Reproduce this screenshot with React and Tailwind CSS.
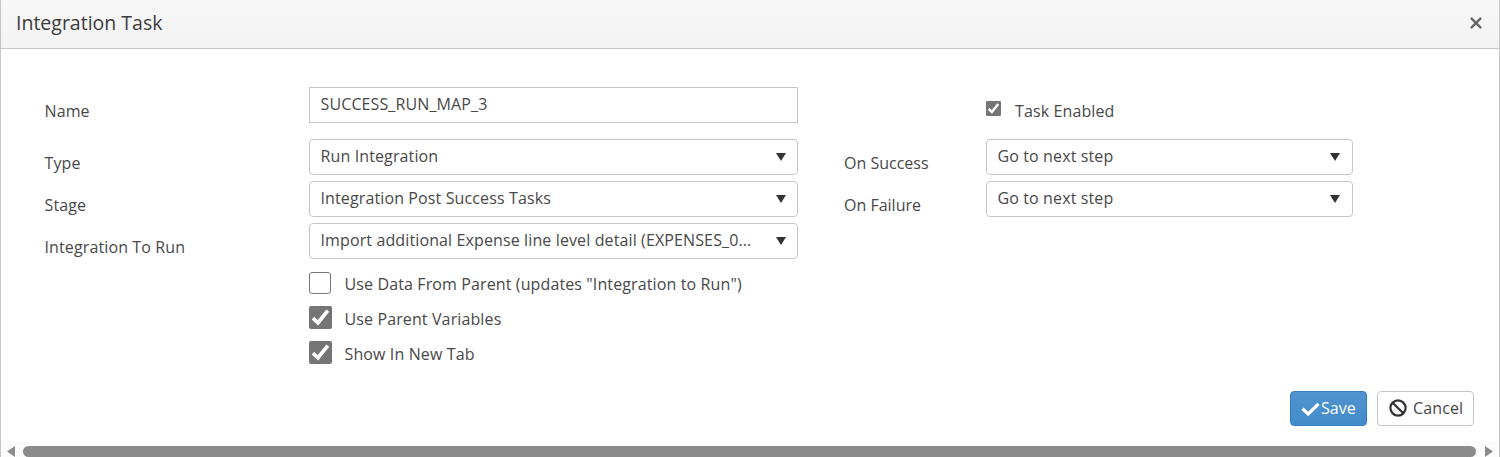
import React from "react";

function Select({ value, className, arrow = "mr-0" }) {
  return (
    <div className={`flex h-9 items-start justify-between rounded-[4px] border border-[#c6c6c6] bg-white pl-[10.5px] pr-[11px] ${className}`}>
      <span className="truncate leading-8">{value}</span>
      <svg className={`mt-[12px] h-[9px] w-[10px] shrink-0 ${arrow}`} viewBox="0 0 10 9">
        <path d="M0 1H10L5 9Z" fill="#333" />
      </svg>
    </div>
  );
}

function Checked({ className }) {
  return (
    <svg className={`shrink-0 ${className}`} viewBox="0 0 22 22">
      <rect width="22" height="22" rx="2" fill="#757575" />
      <path d="M3.8 11.6L8.6 16L18 4.4" fill="none" stroke="#fff" strokeWidth="3.5" />
    </svg>
  );
}

function Label({ children, className }) {
  return <div className={`shrink-0 pt-3 leading-6 ${className}`}>{children}</div>;
}

export default function App() {
  return (
    <div className="flex h-[457px] w-[1500px] flex-col overflow-hidden border-x border-[#c6c6c6] bg-white font-['Open_Sans',sans-serif] text-[16px] tracking-[0.12px] text-[#484848]">
      <header className="flex h-[49px] shrink-0 items-start justify-between border-b border-[#c6c6c6] bg-linear-to-b from-[#f7f7f7] to-[#f3f3f3] pl-[15px] pr-[17px]">
        <h1 className="text-[19.5px] leading-[46px] tracking-normal text-[#3c3c3c]">Integration Task</h1>
        <svg className="mt-[17px] size-3" viewBox="0 0 12 12">
          <path d="M0.9 0.9L11.1 11.1M11.1 0.9L0.9 11.1" stroke="#666" strokeWidth="2.4" />
        </svg>
      </header>

      <main className="flex h-[342px] shrink-0 flex-col pl-[43px] pt-[38px]">
        <div className="flex h-[52px]">
          <Label className="w-[265px] pl-[0.5px]">Name</Label>
          <div className="h-9 w-[489px] border border-[#c6c6c6] pl-[10.5px] leading-8">SUCCESS_RUN_MAP_3</div>
          <Checked className="ml-[188px] mt-[14px] size-[15px]" />
          <Label className="ml-[14px]">Task Enabled</Label>
        </div>
        <div className="flex h-[42px]">
          <Label className="w-[265px] pl-[0.5px]">Type</Label>
          <Select value="Run Integration" className="w-[489px]" />
          <Label className="ml-[46px] w-[142px] tracking-normal">On Success</Label>
          <Select value="Go to next step" className="w-[367px]" arrow="mr-px" />
        </div>
        <div className="flex h-[42px]">
          <Label className="w-[265px] pl-[0.5px]">Stage</Label>
          <Select value="Integration Post Success Tasks" className="w-[489px]" />
          <Label className="ml-[46px] w-[142px] tracking-normal">On Failure</Label>
          <Select value="Go to next step" className="w-[367px]" arrow="mr-px" />
        </div>
        <div className="flex h-[42px]">
          <Label className="w-[265px] pl-[0.5px]">Integration To Run</Label>
          <Select value="Import additional Expense line level detail (EXPENSES_0..." className="w-[489px]" />
        </div>
        <div className="ml-[265px] mt-[6px] flex flex-col">
          <label className="flex h-[35px] gap-[13px]">
            <span className="mt-px size-[22px] rounded-[3px] border border-[#767676]" />
            <span className="pl-[0.5px] pt-px leading-6">Use Data From Parent (updates "Integration to Run")</span>
          </label>
          <label className="flex h-[35px] gap-[13px]">
            <Checked className="-mr-px size-[23px]" />
            <span className="pl-[0.5px] pt-px leading-6">Use Parent Variables</span>
          </label>
          <label className="flex h-[35px] gap-[13px]">
            <Checked className="-mr-px size-[23px]" />
            <span className="pl-[0.5px] pt-px leading-6">Show In New Tab</span>
          </label>
        </div>
      </main>

      <footer className="flex h-[50px] shrink-0 justify-end gap-[10px] pr-[25px]">
        <button className="flex h-[35px] w-[77px] items-start rounded-[4px] border border-[#357ebd] bg-linear-to-b from-[#5094d0] to-[#428bca] pl-[10px] text-white">
          <svg className="mt-[10px] h-[14px] w-[19px]" viewBox="0 0 19 14">
            <path d="M1.5 6.8L7.2 12L17.5 1.8" fill="none" stroke="#fff" strokeWidth="3.2" />
          </svg>
          <span className="ml-px font-medium leading-[33px] tracking-normal">Save</span>
        </button>
        <button className="flex h-[35px] w-[97px] items-start rounded-[4px] border border-[#c6c6c6] bg-linear-to-b from-white to-[#fdfdfd] pl-[11px]">
          <svg className="mt-[7px] size-[18px]" viewBox="0 0 18 18">
            <circle cx="9" cy="9" r="7.6" fill="none" stroke="#333" strokeWidth="2.2" />
            <path d="M3.7 3.7L14.3 14.3" stroke="#333" strokeWidth="2.2" />
          </svg>
          <span className="ml-[6px] leading-[33px]">Cancel</span>
        </button>
      </footer>

      <div className="flex h-4 shrink-0 items-start bg-[#fcfcfc]">
        <svg className="ml-[6px] mt-[5px] h-[11px] w-2 shrink-0" viewBox="0 0 8 11">
          <path d="M8 0V11L0 5.5Z" fill="#8b8b8b" />
        </svg>
        <div className="ml-2 mt-[5px] h-[11px] w-[1453px] shrink-0 rounded-full bg-[#8b8b8b]" />
        <svg className="ml-[9px] mt-[5px] h-[11px] w-2 shrink-0" viewBox="0 0 8 11">
          <path d="M0 0V11L8 5.5Z" fill="#8b8b8b" />
        </svg>
      </div>
    </div>
  );
}
